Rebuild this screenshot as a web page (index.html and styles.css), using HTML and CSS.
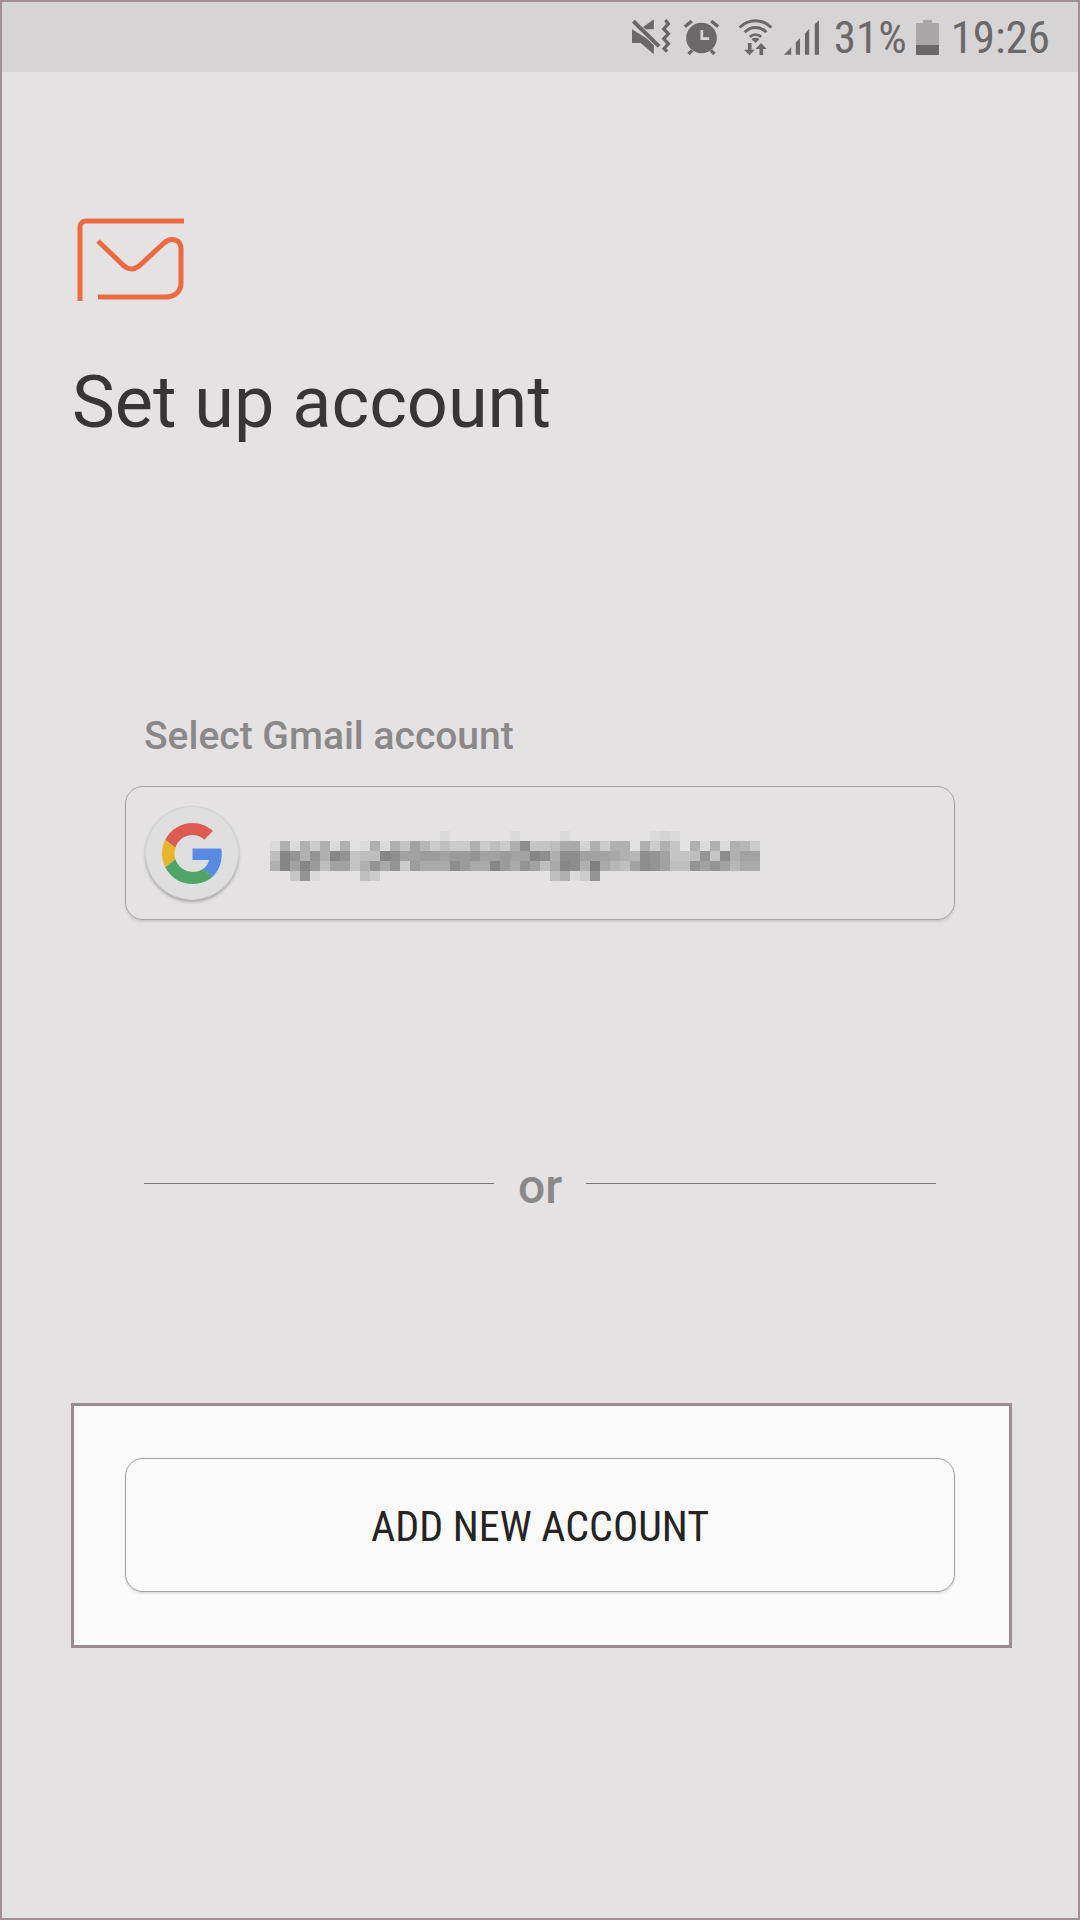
FILE: index.html
```html
<!DOCTYPE html>
<html lang="en">
    <head>
        <meta charset="UTF-8" />
        <meta name="viewport" content="width=device-width, initial-scale=1.0" />
        <title>Set up account</title>
        <link rel="stylesheet" href="styles.css">
    </head>
    <body>
        <div class="screen">
            <div class="status-bar">
                <svg class="icon-mute" viewBox="0 0 130 110" width="43" height="37">
                    <path class="fill" d="M0 30h24L66 0v30L0 30zM0 30v42h26l40 34V72z" />
                    <path class="cut" d="M4 6l78 76" />
                    <path class="line" d="M4 6l78 76" />
                    <path class="line thin" d="M101 2l9 12-14 15 14 15-14 15 14 15-13 14 9 10" />
                </svg>
                <svg class="icon-alarm" viewBox="0 0 110 105" width="37" height="35">
                    <circle class="fill" cx="55" cy="54" r="46" />
                    <path class="line thin" d="M5 20L26 3M84 3l21 17M16 102l11-11M83 91l11 11" />
                    <path class="hand" d="M56 30v26h22" />
                </svg>
                <svg class="icon-wifi" viewBox="0 0 100 110" width="33" height="37">
                    <path class="line arc" d="M2 25C28 -3 72 -3 98 25" />
                    <path class="line arc" d="M17 39C36 20 64 20 83 39" />
                    <path class="line arc" d="M33 53C43 44 57 44 67 53" />
                    <path class="fill" d="M50 72L38 60C45 54 55 54 62 60z" />
                    <path class="fill" d="M27 72h11v20h10L32 109 15 92h12zM62 108h11V90h11L67 72 50 90h12z" />
                </svg>
                <svg class="icon-signal" viewBox="0 0 110 105" width="36" height="35">
                    <path class="fill" d="M0 105L22 82v23zM36 105V68l13-14v51zM64 105V40l13-14v79zM94 105V12l13-12v105z" />
                </svg>
                <span class="status-text">31%</span>
                <svg class="icon-battery" viewBox="0 0 23 35" width="23" height="35">
                    <path class="battery-empty" d="M7 0h9v3h7v24H0V3h7z" />
                    <path class="fill" d="M0 25h23v10H0z" />
                </svg>
                <span class="status-text time">19:26</span>
            </div>

            <div class="content">
                <svg class="mail-icon" viewBox="0 0 110 84" width="110" height="84">
                    <path d="M4 83V9a6 6 0 0 1 6-6h98" />
                    <path d="M22 23l25 24c5 5 11 5 16 1l25-23c7-6 17-4 17 6v34c0 9-7 14-15 14H22" />
                </svg>
                <h1>Set up account</h1>

                <div class="gmail-section">
                    <div class="section-label">Select Gmail account</div>
                    <div class="account-card">
                        <div class="avatar">
                            <svg viewBox="0 0 48 48" width="61" height="61">
                                <path fill="#dd5b50" d="M24 9.5c3.54 0 6.71 1.22 9.21 3.6l6.85-6.85C35.9 2.38 30.47 0 24 0 14.62 0 6.51 5.38 2.56 13.22l7.98 6.19C12.43 13.72 17.74 9.5 24 9.5z" />
                                <path fill="#5a8be2" d="M46.98 24.55c0-1.57-.15-3.09-.38-4.55H24v9.02h12.94c-.58 2.96-2.26 5.48-4.78 7.18l7.73 6c4.51-4.18 7.09-10.36 7.09-17.65z" />
                                <path fill="#e8b52c" d="M10.53 28.59c-.48-1.45-.76-2.99-.76-4.59s.27-3.14.76-4.59l-7.98-6.19C.92 16.46 0 20.12 0 24c0 3.88.92 7.54 2.56 10.78l7.97-6.19z" />
                                <path fill="#4da665" d="M24 48c6.48 0 11.93-2.13 15.89-5.81l-7.73-6c-2.15 1.45-4.92 2.3-8.16 2.3-6.26 0-11.57-4.22-13.47-9.91l-7.98 6.19C6.51 42.62 14.62 48 24 48z" />
                            </svg>
                        </div>
                        <div class="blurred-email" id="blurred-email"></div>
                    </div>
                </div>

                <div class="divider">
                    <span class="divider-line"></span>
                    <span class="divider-text">or</span>
                    <span class="divider-line"></span>
                </div>

                <div class="add-box">
                    <button class="add-button"><span>ADD NEW ACCOUNT</span></button>
                </div>
            </div>
        </div>
        <script src="script.js"></script>
    </body>
</html>
```

FILE: styles.css
```css
* {
    box-sizing: border-box;
}
body {
    margin: 0;
    font-family: Roboto, "Noto Sans", sans-serif;
    background-color: #e4e2e3;
}
.screen {
    width: 1080px;
    height: 1920px;
    border: 2px solid #a09095;
    background-color: #e4e2e3;
}
.status-bar {
    display: flex;
    justify-content: flex-end;
    align-items: center;
    height: 70px;
    padding-right: 28px;
    background-color: #d6d4d5;
    color: #6a6869;
}
.status-bar svg {
    flex: none;
}
.fill {
    fill: #6a6869;
}
.line {
    fill: none;
    stroke: #6a6869;
    stroke-width: 12;
}
.line.thin {
    stroke-width: 10;
}
.line.arc {
    stroke-width: 9;
}
.cut {
    fill: none;
    stroke: #d6d4d5;
    stroke-width: 17;
}
.hand {
    fill: none;
    stroke: #d6d4d5;
    stroke-width: 8;
}
.battery-empty {
    fill: #a8a6a7;
}
.icon-mute {
    margin-right: -3px;
}
.icon-alarm {
    margin-left: 11px;
}
.icon-wifi {
    margin-left: 19px;
}
.icon-signal {
    margin-left: 12px;
}
.status-text {
    margin-left: 14px;
    font-size: 45px;
    font-stretch: 75%;
    line-height: 1;
}
.icon-battery {
    margin-left: 9px;
}
.time {
    margin-left: 12px;
}
.content {
    padding: 146px 0 0 69px;
}
.mail-icon {
    display: block;
    margin-left: 5px;
    fill: none;
}
.mail-icon path {
    fill: none;
    stroke: #ec6a3f;
    stroke-width: 5;
}
h1 {
    margin: 61px 0 0 1px;
    font-size: 72px;
    line-height: 80px;
    font-weight: 400;
    color: #373536;
}
.gmail-section {
    margin: 271px 0 0 54px;
}
.section-label {
    margin-left: 19px;
    font-size: 39px;
    line-height: 44px;
    font-weight: 500;
    color: #8a8889;
}
.account-card {
    display: flex;
    align-items: center;
    gap: 31px;
    width: 830px;
    height: 134px;
    margin-top: 28px;
    padding-left: 19px;
    border: 1px solid #a3a1a2;
    border-radius: 18px;
    box-shadow: 0 2px 2px rgba(0, 0, 0, 0.1);
}
.avatar {
    display: flex;
    justify-content: center;
    align-items: center;
    width: 94px;
    height: 94px;
    border: 1px solid #d4d2d3;
    border-radius: 50%;
    background-color: #e0dfe0;
    box-shadow: 0 2px 3px rgba(0, 0, 0, 0.25);
}
.blurred-email {
    display: grid;
    grid-template-columns: repeat(49, 10px);
    grid-auto-rows: 10px;
    margin-top: 5px;
}
.divider {
    display: flex;
    align-items: center;
    width: 792px;
    margin: 235px 0 0 73px;
}
.divider-line {
    flex: 1;
    height: 1px;
    margin-top: -7px;
    background-color: #777576;
}
.divider-text {
    width: 92px;
    text-align: center;
    font-size: 48px;
    line-height: 64px;
    font-weight: 500;
    color: #8a8889;
}
.add-box {
    width: 941px;
    height: 245px;
    margin: 184px 0 0 0;
    padding: 52px 0 0 51px;
    border: 3px solid #9c8c91;
    background-color: #fafafa;
}
.add-button {
    display: block;
    width: 830px;
    height: 134px;
    padding: 2px 0 0;
    border: 1px solid #a3a1a2;
    border-radius: 18px;
    background-color: #fafafa;
    box-shadow: 0 2px 2px rgba(0, 0, 0, 0.1);
    font-family: inherit;
    font-size: 42px;
    font-stretch: 75%;
    color: #252323;
}
```

FILE: script.js
```js
// pixelated email: one char per 10px cell, '.' is background, 0-f goes dark to light
const rows = [
    ".................e......e....e........ede........",
    "e8e8c8e8fe8e8b69cacc8cac83bba77d8c88f8c8b.8e8e89c",
    "a2484824baa2366556554665662383366" + "6789346bba4b3866",
    "82625a66b8474c5777357725746a7238179a6346aa4646977",
    "..b4e....ac.................a8ec4................",
];

const box = document.getElementById("blurred-email");
rows.forEach((row) => {
    for (const ch of row) {
        const cell = document.createElement("div");
        if (ch !== ".") {
            const gray = 120 + parseInt(ch, 16) * 7;
            cell.style.backgroundColor = `rgb(${gray}, ${gray}, ${gray})`;
        }
        box.appendChild(cell);
    }
});
```
